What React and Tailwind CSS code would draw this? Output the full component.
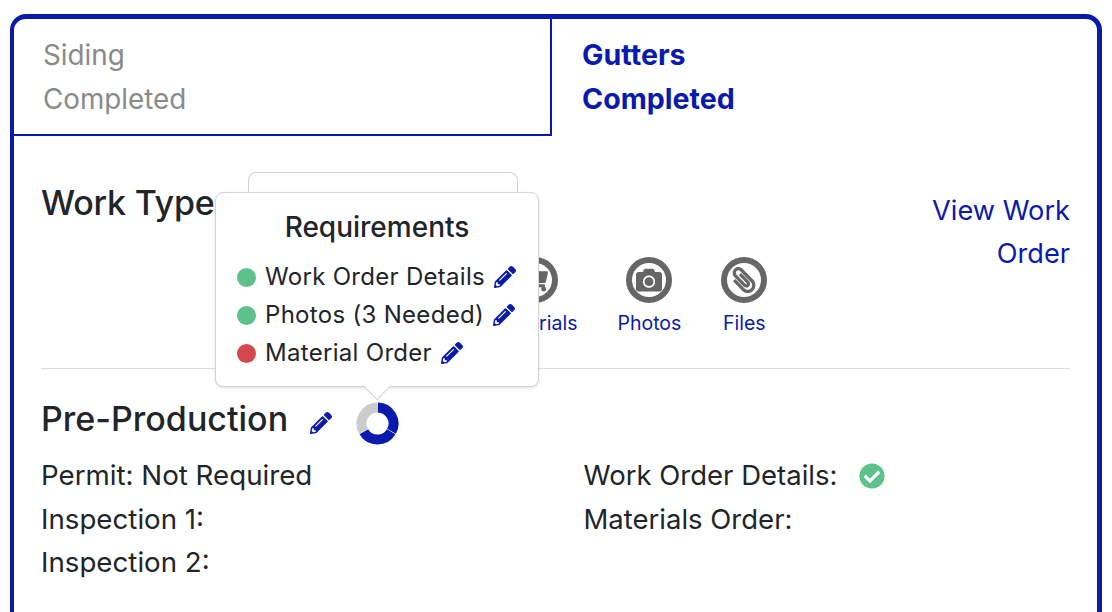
import React from 'react';
import { FaPencilAlt, FaCheckCircle, FaCamera, FaPaperclip, FaShoppingCart } from 'react-icons/fa';

const font = { fontFamily: 'Inter, "Liberation Sans", sans-serif' };

function Donut() {
  // three thirds, the last one still open
  const seg = (a, b, color) => {
    const p = (deg) => {
      const r = (deg - 90) * Math.PI / 180;
      return `${21.5 + 16 * Math.cos(r)} ${21.5 + 16 * Math.sin(r)}`;
    };
    return <path d={`M${p(a)} A16 16 0 0 1 ${p(b)}`} fill="none" stroke={color} strokeWidth="10" />;
  };
  return (
    <svg width="43" height="43" viewBox="0 0 43 43">
      {seg(1, 119, '#0a1aad')}
      {seg(121, 239, '#0a1aad')}
      {seg(241, 359, '#cccccc')}
    </svg>
  );
}

function CircleIcon({ children, label }) {
  return (
    <div className="flex flex-col items-center">
      <div className="w-[46px] h-[46px] rounded-full border-[6px] border-[#666666] flex items-center justify-center text-[#666666]">
        {children}
      </div>
      <span className="mt-[8px] text-[19.5px] leading-[24px] text-[#0a1aad]">{label}</span>
    </div>
  );
}

function ReqRow({ color, label }) {
  return (
    <div className="flex items-center h-[38px]">
      <span className={`w-[19px] h-[19px] rounded-full mr-[9px] ${color}`} />
      <span className="text-[24px] tracking-[0.3px] text-[#212529]">{label}</span>
      <FaPencilAlt className="ml-[9px] text-[22px] text-[#0a1aad]" />
    </div>
  );
}

export default function App() {
  return (
    <div style={font} className="w-[1112px] h-[612px] overflow-hidden bg-white pt-[14px] pl-[10px] pr-[10px]">
      <div className="relative h-[640px] border-[5px] border-l-[4px] border-[#0a1aad] rounded-[16px] overflow-hidden">
        {/* tabs */}
        <div className="flex h-[117px]">
          <div className="w-[538px] border-r-2 border-b-2 border-[#0a1aad] pl-[29px] pt-[14px] text-[27.8px] leading-[44px] text-[#8a8a8a]">
            <div>Siding</div>
            <div>Completed</div>
          </div>
          <div className="flex-1 pl-[30px] pt-[14px] text-[28.6px] leading-[44px] font-bold text-[#0a1aad]">
            <div>Gutters</div>
            <div>Completed</div>
          </div>
        </div>

        <div className="px-[27px]">
          {/* work type */}
          <div className="relative flex h-[233px] border-b border-[#dddddd]">
            <h2 className="mt-[45px] text-[34px] leading-[44px] font-medium tracking-[-0.2px] text-[#212529]">Work Type</h2>
            <div className="ml-[33px] mt-[36px] w-[270px] h-[40px] border border-[#ced4da] border-b-0 rounded-t-[8px]" />
            <div className="absolute left-[452px] top-[121px] flex gap-[40px]">
              <CircleIcon label="Materials"><FaShoppingCart className="text-[26px]" /></CircleIcon>
              <CircleIcon label="Photos"><FaCamera className="text-[26px]" /></CircleIcon>
              <CircleIcon label="Files"><FaPaperclip className="text-[26px] -scale-x-100" /></CircleIcon>
            </div>
            <div className="ml-auto mt-[53px] text-right text-[27.2px] leading-[43px] text-[#0a1aad]">
              <div>View Work</div>
              <div>Order</div>
            </div>
          </div>

          {/* pre-production */}
          <div className="flex items-center mt-[28px] h-[44px]">
            <h2 className="text-[34px] leading-[44px] font-medium text-[#212529]">Pre-Production</h2>
            <FaPencilAlt className="ml-[22px] mt-[8px] text-[22px] text-[#0a1aad]" />
            <div className="ml-[24px] mt-[8px]"><Donut /></div>
          </div>

          <div className="grid grid-cols-2 mt-[13px] text-[27.7px] leading-[43.5px] text-[#212529]">
            <div>
              <div>Permit: Not Required</div>
              <div>Inspection 1:</div>
              <div>Inspection 2:</div>
            </div>
            <div className="pl-[28px] text-[27.5px]">
              <div className="flex items-center">
                Work Order Details:
                <FaCheckCircle className="ml-[22px] text-[26px] text-[#5cc18a]" />
              </div>
              <div>Materials Order:</div>
            </div>
          </div>
        </div>

        {/* popover over the work type row */}
        <div className="absolute left-[201px] top-[173px] w-[324px] h-[195px] bg-white border border-[#d4d4d4] rounded-[8px] shadow-sm px-[21px]">
          <div className="mt-[14px] mb-[11px] text-center text-[28px] leading-[40px] font-medium text-[#212529]">Requirements</div>
          <ReqRow color="bg-[#5cc18a]" label="Work Order Details" />
          <ReqRow color="bg-[#5cc18a]" label="Photos (3 Needed)" />
          <ReqRow color="bg-[#d5474f]" label="Material Order" />
          <div className="absolute left-[151px] bottom-[-10px] w-[20px] h-[20px] rotate-45 bg-white border-r border-b border-[#d4d4d4]" />
        </div>
      </div>
    </div>
  );
}
